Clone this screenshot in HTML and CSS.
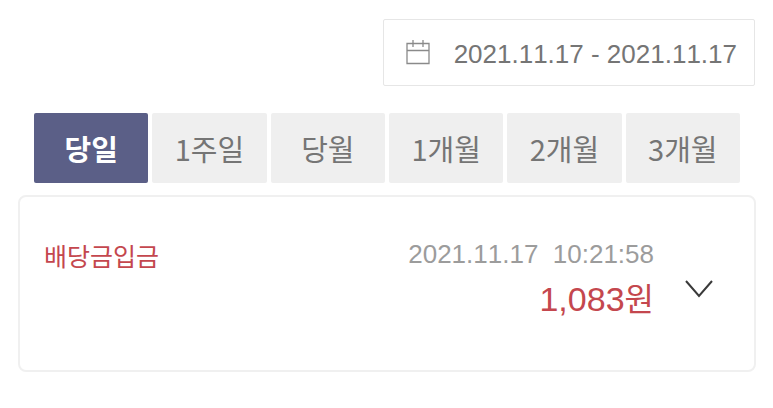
FILE: index.html
```
<!DOCTYPE html>
<html lang="ko">
<head>
    <meta charset="UTF-8">
    <meta name="viewport" content="width=device-width, initial-scale=1.0">
    <title>거래내역</title>
    <link rel="stylesheet" href="styles.css">
</head>
<body>
    <div class="date-row">
        <button type="button" class="date-range">
            <svg class="calendar-icon" viewBox="0 0 24 26" aria-hidden="true">
                <path d="M1 4.5H23V24.5H1ZM1 11.5H23M7 1V8M17 1V8"/>
            </svg>
            2021.11.17 - 2021.11.17
        </button>
    </div>

    <div class="periods">
        <button type="button" class="period active">당일</button>
        <button type="button" class="period">1주일</button>
        <button type="button" class="period">당월</button>
        <button type="button" class="period">1개월</button>
        <button type="button" class="period">2개월</button>
        <button type="button" class="period">3개월</button>
    </div>

    <div class="card">
        <div class="type">배당금입금</div>
        <div class="detail">
            <div class="time">2021.11.17&nbsp; 10:21:58</div>
            <div class="amount">1,083<span class="unit">원</span></div>
        </div>
        <button type="button" class="toggle" aria-label="상세보기">
            <svg class="chevron" viewBox="0 0 28 18" aria-hidden="true">
                <path d="M1 1L14 16L27 1"/>
            </svg>
        </button>
    </div>
</body>
</html>
```
FILE: styles.css
```
* { box-sizing: border-box; }
body { margin: 0; padding: 19px 17px 36px 18px; background: #fff; font-family: "Liberation Sans", "Noto Sans CJK KR", sans-serif; font-kerning: none; }
button { margin: 0; padding: 0; border: none; background: none; font: inherit; cursor: pointer; }
svg { display: block; fill: none; }

.date-row { display: flex; justify-content: flex-end; padding-right: 1px; }
.date-range { display: flex; align-items: center; gap: 24px; height: 67px; padding: 3px 17px 0 22px; border: 1px solid #e6e6e6; border-radius: 2px; color: #757575; font-size: 26px; white-space: nowrap; }
.calendar-icon { width: 24px; height: 26px; margin-bottom: 4px; stroke: #8a8a8a; stroke-width: 1.3; }

.periods { display: flex; gap: 4px; padding: 0 16px; margin: 27px 0 12px; }
.period { flex: 1; height: 70px; border-radius: 2px; background: #efefef; color: #757575; font-family: "Noto Sans CJK KR", sans-serif; font-size: 29px; }
.period.active { background: #5b5f87; color: #fff; font-weight: bold; }

.card { display: flex; align-items: flex-start; padding: 38px 41px 44px 24px; border: 2px solid #f0f0f0; border-radius: 8px; }
.type { color: #c4474e; font-family: "Noto Sans CJK KR", sans-serif; font-size: 25px; line-height: 40px; }
.detail { margin-left: auto; text-align: right; }
.time { color: #9c9c9c; font-size: 26px; line-height: 38px; }
.amount { color: #c4474e; font-size: 34px; line-height: 52px; }
.unit { font-size: 32px; }
.toggle { margin: 45px 0 0 31px; }
.chevron { width: 28px; height: 18px; stroke: #3a3a3a; stroke-width: 2; }
```
